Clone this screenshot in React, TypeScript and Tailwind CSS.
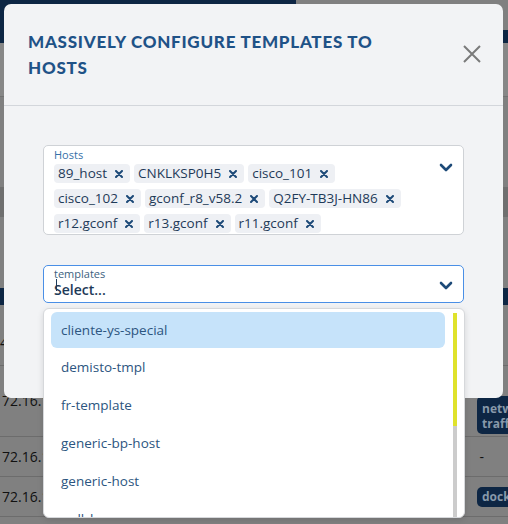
import React from "react";

const hosts: string[][] = [
  ["89_host", "CNKLKSP0H5", "cisco_101"],
  ["cisco_102", "gconf_r8_v58.2", "Q2FY-TB3J-HN86"],
  ["r12.gconf", "r13.gconf", "r11.gconf"],
];

const templates = [
  "cliente-ys-special",
  "demisto-tmpl",
  "fr-template",
  "generic-bp-host",
  "generic-host",
  "poll_long",
];

function Chevron() {
  return (
    <svg width="14" height="9" viewBox="0 0 14 9" fill="none">
      <path d="M2 2l5 5 5-5" stroke="#1d4a78" strokeWidth="2.6" strokeLinecap="round" strokeLinejoin="round" />
    </svg>
  );
}

function SmallX() {
  return (
    <svg width="8" height="8" viewBox="0 0 8 8" fill="none">
      <path d="M1 1l6 6M7 1L1 7" stroke="#1d4a78" strokeWidth="2" strokeLinecap="round" />
    </svg>
  );
}

function Chip({ label }: { label: string }) {
  return (
    <div className="flex items-center gap-[8px] rounded-[4px] bg-[#eef0f4] pl-[4px] pr-[7px] h-[19px] text-[13.5px] text-[#1e3a58]">
      <span>{label}</span>
      <SmallX />
    </div>
  );
}

export default function App() {
  return (
    <div
      className="relative w-[508px] h-[524px] overflow-hidden bg-[#808080]"
      style={{ fontFamily: '"Open Sans", "Liberation Sans", sans-serif' }}
    >
      {/* dimmed background page */}
      <div className="flex flex-col w-full">
        <div className="flex h-[43px]">
          <div className="w-[296px] bg-[#0d2644]" />
          <div className="flex-1 flex flex-col justify-end">
            <div className="h-[13px] bg-[#0d2644]" />
          </div>
        </div>
        <div className="h-[54px] bg-[#878787] border-b border-[#727272]" />
        <div className="h-[90px]" />
        <div className="h-[30px] bg-[#6f6f6f]" />
        <div className="h-[71px]" />
        <div className="h-[17px] bg-[#0d2644]" />
        <div className="h-[61px] border-b border-[#6c6c6c] flex items-end pb-[12px] text-[14px] text-[#111]">4</div>
        <div className="h-[71px] border-b border-[#6c6c6c] flex items-start justify-between text-[14px] text-[#111]">
          <span className="-ml-[6px] mt-[24px]">172.16.10</span>
          <div className="mr-[-10px] mt-[30px] h-[38px] rounded-[5px] bg-[#0d2644] text-[#8899aa] font-bold text-[12px] leading-[15px] px-[5px] pt-[5px] w-[41px]">netw traffi</div>
        </div>
        <div className="h-[40px] border-b border-[#6c6c6c] flex items-center justify-between text-[14px] text-[#111]">
          <span className="-ml-[6px]">172.16.10</span>
          <span className="mr-[24px]">-</span>
        </div>
        <div className="h-[40px] border-b border-[#6c6c6c] flex items-center justify-between text-[14px] text-[#111]">
          <span className="-ml-[6px]">172.16.12</span>
          <div className="mr-[-10px] rounded-[5px] bg-[#0d2644] text-[#8899aa] font-bold text-[12px] leading-[20px] px-[5px] w-[41px]">dock</div>
        </div>
      </div>

      {/* modal */}
      <div className="absolute left-[4px] top-[4px] w-[499px] h-[394px] rounded-[7px] bg-[#f2f3f5]">
        <div className="flex items-start justify-between h-[102px] border-b border-[#d3d6db] pl-[24px] pr-[22px] pt-[25px]">
          <h2
            className="text-[17px] leading-[26px] font-black uppercase text-[#1f5287] tracking-[0.75px] w-[380px]"
            style={{ fontFamily: 'Lato, "Open Sans", sans-serif' }}
          >
            Massively configure templates to hosts
          </h2>
          <svg width="18" height="18" viewBox="0 0 18 18" className="mt-[16px]" fill="none">
            <path d="M1 1l16 16M17 1L1 17" stroke="#7a7a7a" strokeWidth="2" />
          </svg>
        </div>

        <div className="px-[39px] pt-[39px] flex flex-col">
          {/* Hosts */}
          <div className="flex h-[90px] rounded-[5px] border border-[#cfd2d6] bg-white pl-[10px] pr-[10px] pt-[2px]">
            <div className="flex-1 flex flex-col">
              <div className="text-[11px] leading-[13px] text-[#3670a8]">Hosts</div>
              <div className="flex flex-col gap-[6px] mt-[3px]">
                {hosts.map((row, i) => (
                  <div key={i} className="flex gap-[4px]">
                    {row.map((h) => (
                      <Chip key={h} label={h} />
                    ))}
                  </div>
                ))}
              </div>
            </div>
            <div className="pt-[15px]">
              <Chevron />
            </div>
          </div>

          {/* templates */}
          <div className="relative mt-[30px]">
            <div className="flex h-[38px] rounded-[5px] border border-[#4a8fe6] bg-white pl-[10px] pr-[10px]">
              <div className="flex-1 flex flex-col pt-[1px]">
                <div className="text-[11px] leading-[13px] text-[#3d5f80]">templates</div>
                <div className="relative text-[14px] leading-[20px] font-semibold text-[#1e3a58]">
                  <span className="absolute left-[2px] top-[-1px] w-[1px] h-[12px] bg-[#1e3a58]" />
                  Select...
                </div>
              </div>
              <div className="pt-[15px]">
                <Chevron />
              </div>
            </div>

            {/* dropdown menu */}
            <div className="absolute left-0 top-[43px] w-[422px] h-[210px] rounded-[6px] border border-[#d6d8db] bg-white shadow-[0_2px_6px_rgba(0,0,0,0.12)] overflow-hidden flex pl-[7px] pr-[7px] pt-[3px]">
              <div className="flex-1 flex flex-col">
                {templates.map((t, i) => (
                  <div
                    key={t}
                    className={
                      "shrink-0 flex items-center pl-[10px] text-[13.5px] text-[#2c5580] rounded-[6px] " +
                      (i === 0 ? "bg-[#c6e3fa] h-[36px]" : "h-[38px]")
                    }
                  >
                    {t}
                  </div>
                ))}
              </div>
              <div className="w-[4px] ml-[8px] flex flex-col h-[204px] bg-[#cccccc] mt-[1px] shrink-0">
                <div className="h-[113px] bg-[#dfe22c]" />
              </div>
            </div>
          </div>
        </div>
      </div>
    </div>
  );
}
